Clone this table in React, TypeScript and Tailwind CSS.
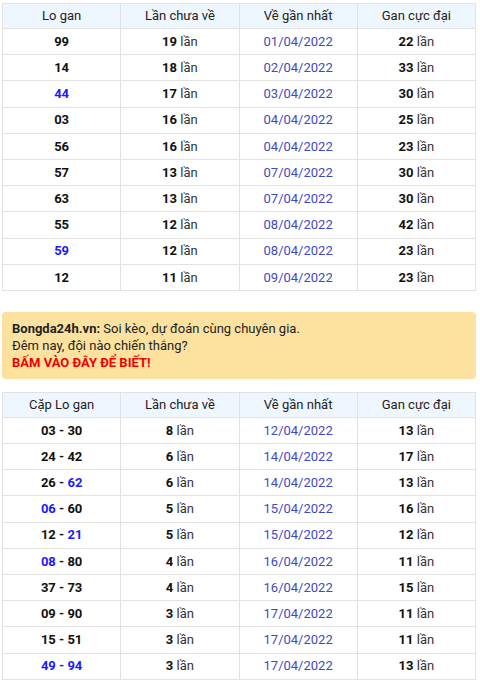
import React from 'react';

type Row = { so: React.ReactNode; chua: string; ngay: string; max: string };

const blue = 'text-[#1a1aff]';

const loGan: Row[] = [
    { so: '99', chua: '19', ngay: '01/04/2022', max: '22' },
    { so: '14', chua: '18', ngay: '02/04/2022', max: '33' },
    { so: <span className={blue}>44</span>, chua: '17', ngay: '03/04/2022', max: '30' },
    { so: '03', chua: '16', ngay: '04/04/2022', max: '25' },
    { so: '56', chua: '16', ngay: '04/04/2022', max: '23' },
    { so: '57', chua: '13', ngay: '07/04/2022', max: '30' },
    { so: '63', chua: '13', ngay: '07/04/2022', max: '30' },
    { so: '55', chua: '12', ngay: '08/04/2022', max: '42' },
    { so: <span className={blue}>59</span>, chua: '12', ngay: '08/04/2022', max: '23' },
    { so: '12', chua: '11', ngay: '09/04/2022', max: '23' },
];

const capLoGan: Row[] = [
    { so: '03 - 30', chua: '8', ngay: '12/04/2022', max: '13' },
    { so: '24 - 42', chua: '6', ngay: '14/04/2022', max: '17' },
    { so: <>26 - <span className={blue}>62</span></>, chua: '6', ngay: '14/04/2022', max: '13' },
    { so: <><span className={blue}>06</span> - 60</>, chua: '5', ngay: '15/04/2022', max: '16' },
    { so: <>12 - <span className={blue}>21</span></>, chua: '5', ngay: '15/04/2022', max: '12' },
    { so: <><span className={blue}>08</span> - 80</>, chua: '4', ngay: '16/04/2022', max: '11' },
    { so: '37 - 73', chua: '4', ngay: '16/04/2022', max: '15' },
    { so: '09 - 90', chua: '3', ngay: '17/04/2022', max: '11' },
    { so: '15 - 51', chua: '3', ngay: '17/04/2022', max: '11' },
    { so: <span className={blue}>49 - 94</span>, chua: '3', ngay: '17/04/2022', max: '13' },
];

const GanTable: React.FC<{ title: string; rows: Row[] }> = ({ title, rows }) => {
    const th = 'h-[25px] border border-[#e2e2e2] font-normal text-[13px] text-[#222]';
    const td = 'h-[26.2px] border border-[#e2e2e2] text-[13px] text-center';
    return (
        <table className="w-[474px] ml-[2px] table-fixed border-collapse">
            <thead>
                <tr className="bg-[#eef6ff]">
                    <th className={th}>{title}</th>
                    <th className={th}>Lần chưa về</th>
                    <th className={th}>Về gần nhất</th>
                    <th className={th}>Gan cực đại</th>
                </tr>
            </thead>
            <tbody>
                {rows.map((r, i) => (
                    <tr key={i}>
                        <td className={`${td} font-bold text-[#111]`}>{r.so}</td>
                        <td className={`${td} text-[#333]`}><b className="text-[#111]">{r.chua}</b> lần</td>
                        <td className={`${td} text-[#3d4ac0]`}>{r.ngay}</td>
                        <td className={`${td} text-[#333]`}><b className="text-[#111]">{r.max}</b> lần</td>
                    </tr>
                ))}
            </tbody>
        </table>
    );
};

export default function App() {
    return (
        <div className="w-[480px] h-[684px] overflow-hidden bg-white pt-[3px] font-['Roboto','Liberation_Sans',sans-serif]">
            <GanTable title="Lo gan" rows={loGan} />

            {/* Banner */}
            <div className="mt-[21px] mx-[2px] w-[474px] rounded-[4px] bg-[#fce29e] px-[10px] pt-[8px] pb-[8px] text-[13px] leading-[17px] text-[#222]">
                <p><b>Bongda24h.vn:</b> Soi kèo, dự đoán cùng chuyên gia.</p>
                <p>Đêm nay, đội nào chiến thắng?</p>
                <p className="font-bold text-[#ee0000]">BẤM VÀO ĐÂY ĐỂ BIẾT!</p>
            </div>

            <div className="mt-[13px]">
                <GanTable title="Cặp Lo gan" rows={capLoGan} />
            </div>
        </div>
    );
}
